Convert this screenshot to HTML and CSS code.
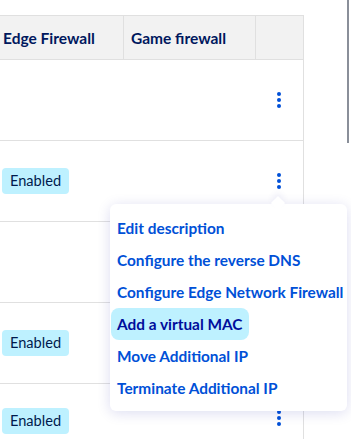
FILE: index.html
```html
<!DOCTYPE html>
<html>
<head>
<meta charset="utf-8">
<link rel="stylesheet" href="styles.css">
</head>
<body>
<div class="page">
  <div class="table-wrap">
    <div class="row head">
      <div class="cell c1 th">Edge Firewall</div>
      <div class="cell c2 th">Game firewall</div>
      <div class="cell c3 th"></div>
    </div>
    <div class="row">
      <div class="cell c1"></div>
      <div class="cell c2"></div>
      <div class="cell c3"><span class="dots"><i></i><i></i><i></i></span></div>
    </div>
    <div class="row">
      <div class="cell c1"><span class="badge">Enabled</span></div>
      <div class="cell c2"></div>
      <div class="cell c3 anchor"><span class="dots"><i></i><i></i><i></i></span>
        <div class="menu">
          <span class="arrow"></span>
          <a class="item">Edit description</a>
          <a class="item">Configure the reverse DNS</a>
          <a class="item">Configure Edge Network Firewall</a>
          <a class="item active">Add a virtual MAC</a>
          <a class="item">Move Additional IP</a>
          <a class="item">Terminate Additional IP</a>
        </div>
      </div>
    </div>
    <div class="row">
      <div class="cell c1"></div>
      <div class="cell c2"></div>
      <div class="cell c3"></div>
    </div>
    <div class="row">
      <div class="cell c1"><span class="badge">Enabled</span></div>
      <div class="cell c2"></div>
      <div class="cell c3"></div>
    </div>
    <div class="row last">
      <div class="cell c1"><span class="badge">Enabled</span></div>
      <div class="cell c2"></div>
      <div class="cell c3"><span class="dots"><i></i><i></i><i></i></span></div>
    </div>
  </div>
  <div class="scrollbar"></div>
</div>
</body>
</html>
```
FILE: styles.css
```css
html, body {
  margin: 0;
  padding: 0;
  background: #fff;
}
body {
  font-family: "Source Sans Pro", Lato, "Noto Sans", sans-serif;
  width: 351px;
  height: 439px;
  overflow: hidden;
}
.page {
  display: flex;
  padding-top: 15px;
  height: 424px;
  position: relative;
  overflow: hidden;
}
.table-wrap {
  width: 303px;
  border-top: 1px solid #e0e0e0;
  border-right: 1px solid #e0e0e0;
  flex: none;
}
.row {
  display: flex;
  height: 80px;
  border-bottom: 1px solid #e0e0e0;
}
.row.last {
  height: 55px;
  border-bottom: none;
  align-items: flex-start;
}
.row.last .cell { padding-top: 24px; height: 55px; align-items: flex-start; }
.row.head {
  height: 43px;
  background: #f2f2f2;
}
.cell {
  display: flex;
  align-items: center;
  box-sizing: border-box;
}
.c1 { width: 124px; padding-left: 2px; }
.c2 { width: 132px; padding-left: 0; }
.c3 { width: 47px; justify-content: center; }
.th {
  font-weight: 700;
  font-size: 15.5px;
  color: #00185e;
  border-right: 1px solid #e0e0e0;
}
.th.c1 { padding-left: 3px; }
.th.c2 { padding-left: 7px; }
.th.c3 { border-right: none; }
.badge {
  display: inline-block;
  background: #bef1ff;
  color: #001a4d;
  font-size: 14.6px;
  line-height: 26px;
  padding: 0 8px;
  border-radius: 4px;
}
.row.last .c3 { padding-top: 26px; }
.dots {
  display: flex;
  flex-direction: column;
  gap: 2px;
  margin-left: -1px;
}
.dots i {
  display: block;
  width: 4px;
  height: 4px;
  border-radius: 50%;
  background: #0050d7;
}
.anchor { position: relative; }
.menu {
  position: absolute;
  top: 63px;
  right: -44px;
  width: 237px;
  box-sizing: border-box;
  padding: 8px 0 7px 1px;
  background: #fff;
  border-radius: 6px;
  box-shadow: 0 2px 14px rgba(0, 14, 156, 0.14);
  display: flex;
  flex-direction: column;
  align-items: flex-start;
  z-index: 2;
}
.arrow {
  position: absolute;
  top: -6px;
  left: 163px;
  width: 10px;
  height: 10px;
  background: #fff;
  transform: rotate(45deg);
  box-shadow: -3px -3px 6px rgba(0, 14, 156, 0.06);
}
.item {
  position: relative;
  display: block;
  height: 32px;
  line-height: 32px;
  padding: 0 6px;
  font-size: 15.4px;
  font-weight: 700;
  color: #0050d7;
  white-space: nowrap;
  border-radius: 8px;
}
.item.active {
  background: #bef1ff;
  color: #000e9c;
}
.scrollbar {
  position: absolute;
  top: 0;
  left: 347px;
  width: 2px;
  height: 143px;
  background: #8a8f99;
}
```
